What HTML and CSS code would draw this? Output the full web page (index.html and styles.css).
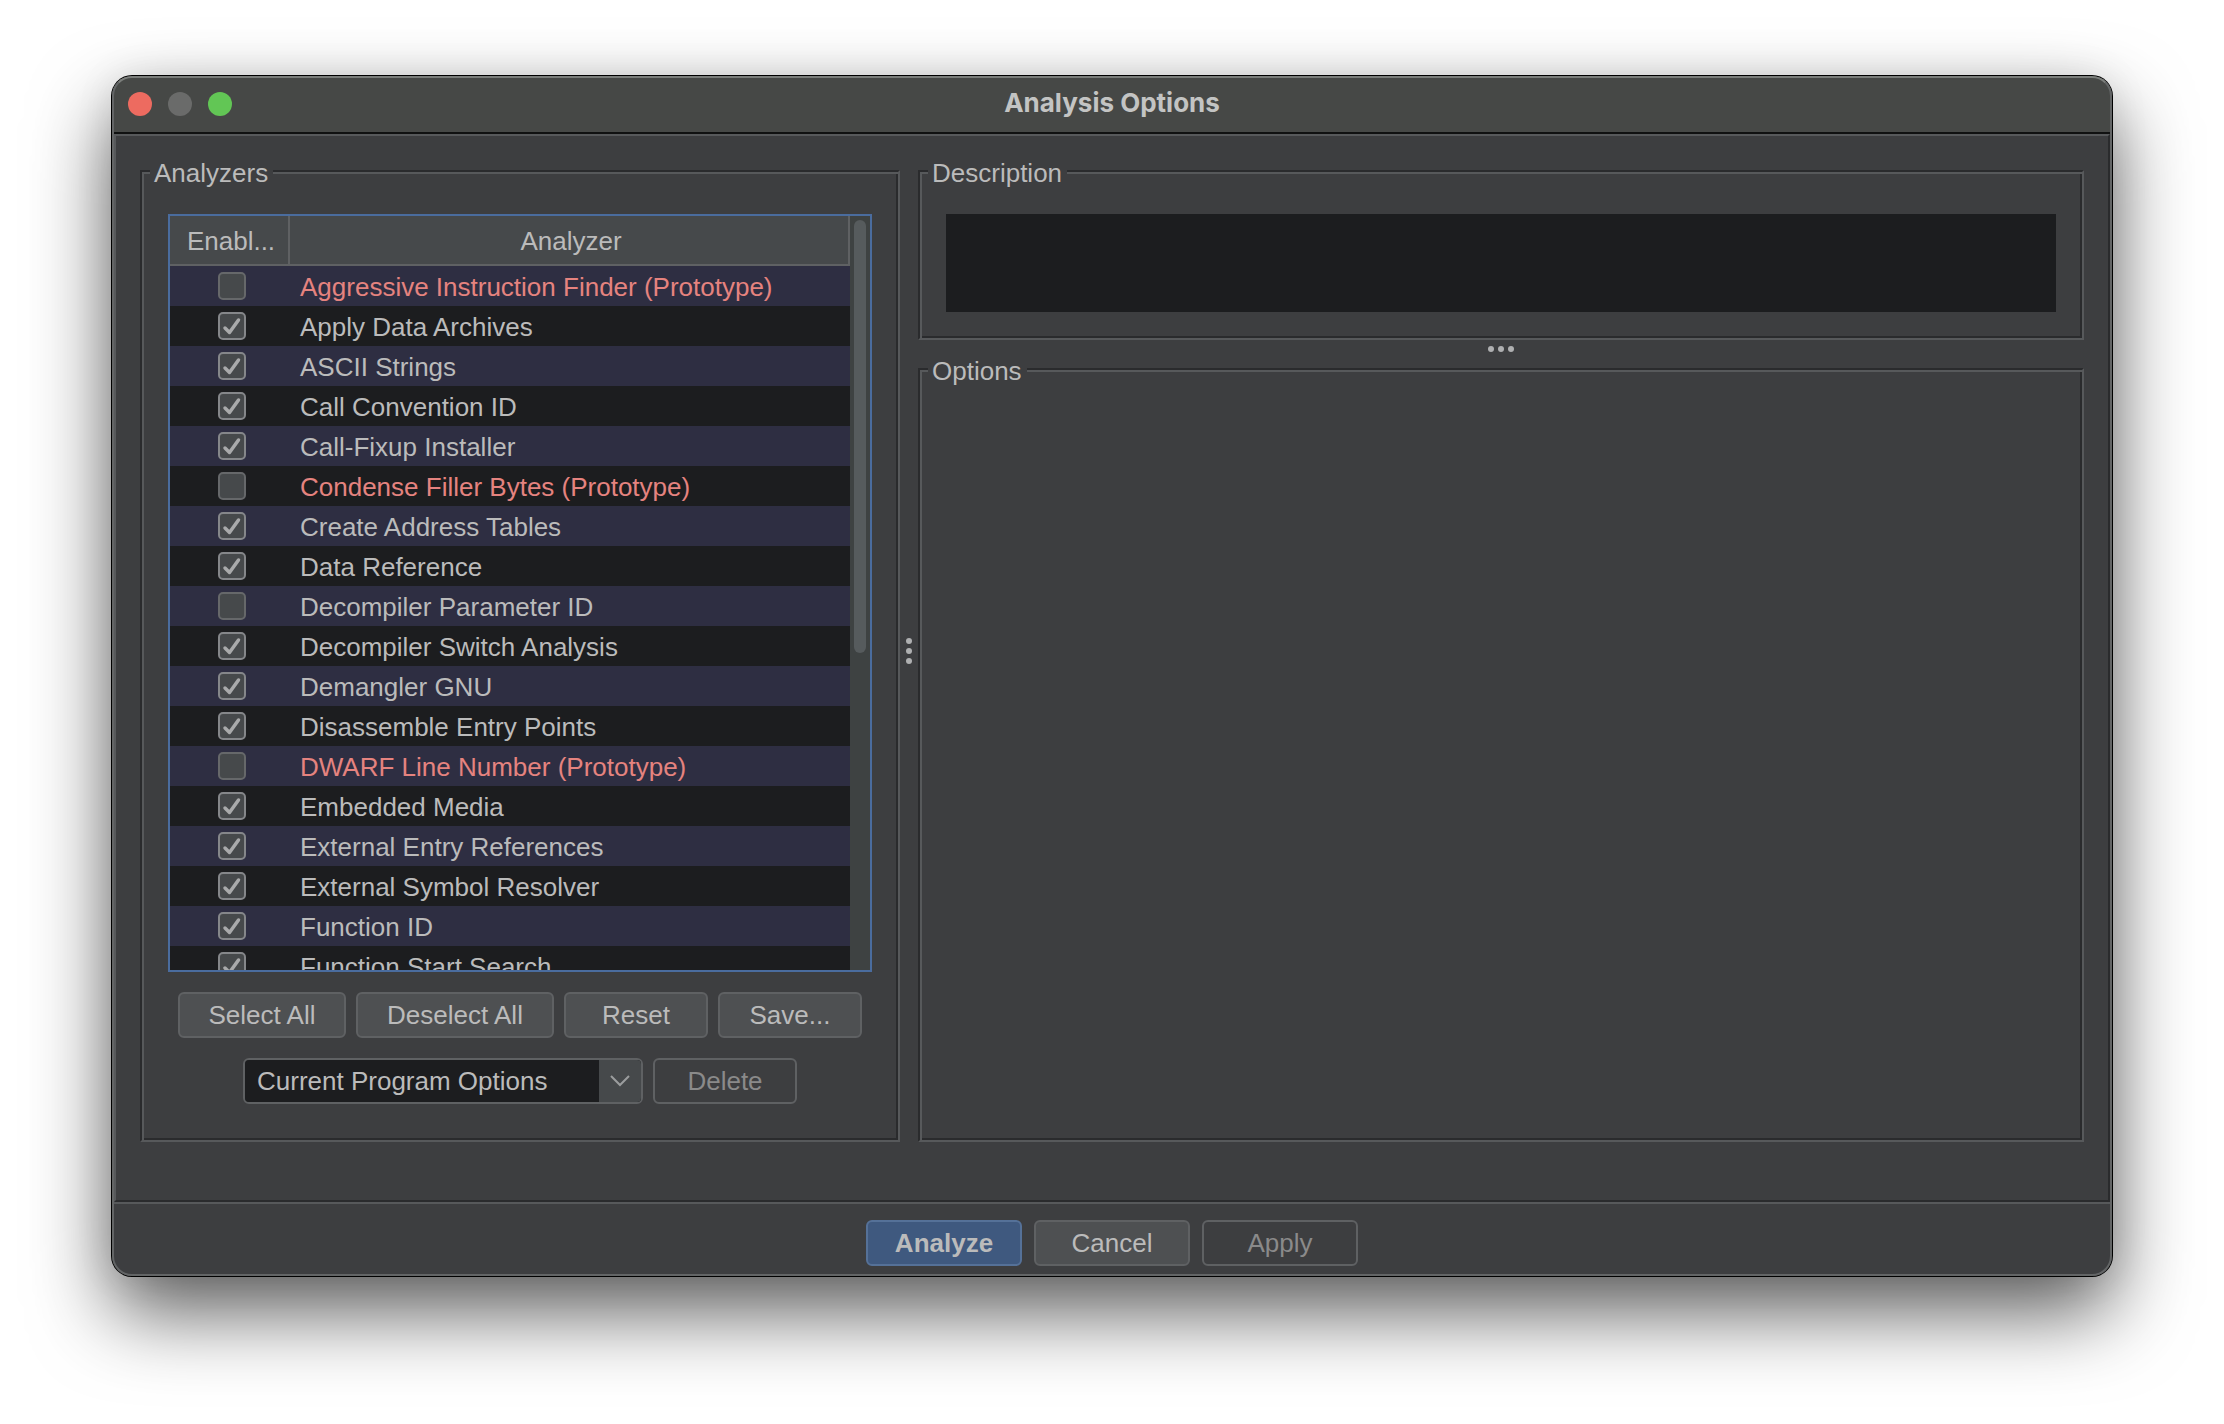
FILE: index.html
```html
<!DOCTYPE html>
<html lang="en">
<head>
<meta charset="utf-8">
<title>Analysis Options</title>
<link rel="stylesheet" href="styles.css">
</head>
<body>
<main class="window">
  <header class="titlebar">
    <div class="lights">
      <button class="light light-close" type="button" aria-label="Close"></button>
      <button class="light light-min" type="button" aria-label="Minimize" disabled></button>
      <button class="light light-zoom" type="button" aria-label="Zoom"></button>
    </div>
    <h1 class="title">Analysis Options</h1>
  </header>

  <div class="content">
    <div class="pane">
      <section class="group group-analyzers">
        <h2 class="group-title">Analyzers</h2>
        <div class="table-frame">
          <div class="table-view">
            <table class="analyzers">
              <colgroup><col class="col-enabled"><col></colgroup>
              <thead>
                <tr><th scope="col">Enabl...</th><th scope="col">Analyzer</th></tr>
              </thead>
              <tbody>
                <tr class="proto"><td><input type="checkbox" id="a1"></td><td><label for="a1">Aggressive Instruction Finder (Prototype)</label></td></tr>
                <tr><td><input type="checkbox" id="a2" checked></td><td><label for="a2">Apply Data Archives</label></td></tr>
                <tr><td><input type="checkbox" id="a3" checked></td><td><label for="a3">ASCII Strings</label></td></tr>
                <tr><td><input type="checkbox" id="a4" checked></td><td><label for="a4">Call Convention ID</label></td></tr>
                <tr><td><input type="checkbox" id="a5" checked></td><td><label for="a5">Call-Fixup Installer</label></td></tr>
                <tr class="proto"><td><input type="checkbox" id="a6"></td><td><label for="a6">Condense Filler Bytes (Prototype)</label></td></tr>
                <tr><td><input type="checkbox" id="a7" checked></td><td><label for="a7">Create Address Tables</label></td></tr>
                <tr><td><input type="checkbox" id="a8" checked></td><td><label for="a8">Data Reference</label></td></tr>
                <tr><td><input type="checkbox" id="a9"></td><td><label for="a9">Decompiler Parameter ID</label></td></tr>
                <tr><td><input type="checkbox" id="a10" checked></td><td><label for="a10">Decompiler Switch Analysis</label></td></tr>
                <tr><td><input type="checkbox" id="a11" checked></td><td><label for="a11">Demangler GNU</label></td></tr>
                <tr><td><input type="checkbox" id="a12" checked></td><td><label for="a12">Disassemble Entry Points</label></td></tr>
                <tr class="proto"><td><input type="checkbox" id="a13"></td><td><label for="a13">DWARF Line Number (Prototype)</label></td></tr>
                <tr><td><input type="checkbox" id="a14" checked></td><td><label for="a14">Embedded Media</label></td></tr>
                <tr><td><input type="checkbox" id="a15" checked></td><td><label for="a15">External Entry References</label></td></tr>
                <tr><td><input type="checkbox" id="a16" checked></td><td><label for="a16">External Symbol Resolver</label></td></tr>
                <tr><td><input type="checkbox" id="a17" checked></td><td><label for="a17">Function ID</label></td></tr>
                <tr><td><input type="checkbox" id="a18" checked></td><td><label for="a18">Function Start Search</label></td></tr>
              </tbody>
            </table>
          </div>
          <div class="scroll-track"><div class="scroll-thumb"></div></div>
        </div>
        <div class="row">
          <button class="btn btn-select" type="button">Select All</button>
          <button class="btn btn-deselect" type="button">Deselect All</button>
          <button class="btn" type="button">Reset</button>
          <button class="btn" type="button">Save...</button>
        </div>
        <div class="row">
          <div class="combo">
            <select aria-label="Saved configuration"><option>Current Program Options</option></select>
            <span class="combo-arrow"><svg width="20" height="12" viewBox="0 0 20 12" aria-hidden="true"><path d="M1 1 10 10 19 1" fill="none" stroke="#9b9d9e" stroke-width="2"/></svg></span>
          </div>
          <button class="btn" type="button" disabled>Delete</button>
        </div>
      </section>
    </div>

    <div class="splitter splitter-v"><i></i><i></i><i></i></div>

    <div class="side">
      <div class="pane">
        <section class="group group-description">
          <h2 class="group-title">Description</h2>
          <div class="description"></div>
        </section>
      </div>
      <div class="splitter splitter-h"><i></i><i></i><i></i></div>
      <div class="pane pane-fill">
        <section class="group">
          <h2 class="group-title">Options</h2>
        </section>
      </div>
    </div>
  </div>

  <footer class="footer">
    <button class="btn btn-wide btn-default" type="button">Analyze</button>
    <button class="btn btn-wide" type="button">Cancel</button>
    <button class="btn btn-wide" type="button" disabled>Apply</button>
  </footer>
</main>
</body>
</html>
```
FILE: styles.css
```css
:root {
  --panel: #3d3e40;
  --well: #1c1d1f;
  --line-dark: #2a2b2d;
  --line-light: #57595b;
  --border: #5f6163;
  --text: #bbbbbb;
  --muted: #8a8a8a;
}

* {
  box-sizing: border-box;
}

body {
  margin: 0;
  height: 100vh;
  padding: 76px 112px 148px;
  display: flex;
  background: #fff;
  color: var(--text);
  font: 26px/30px "Liberation Sans", Arial, sans-serif;
}

.window {
  flex: 1;
  min-width: 0;
  position: relative;
  display: flex;
  flex-direction: column;
  background: var(--panel);
  border-radius: 20px;
  box-shadow: 0 0 0 1px #000, 0 36px 80px rgba(0, 0, 0, 0.64), 0 0 40px rgba(0, 0, 0, 0.08);
}

/* light rim on the inside of the window edge */
.window::after {
  content: "";
  position: absolute;
  inset: 0;
  border: 2px solid #636566;
  border-top-color: #7b7e7b;
  border-radius: 20px;
  pointer-events: none;
}

/* title bar */
.titlebar {
  height: 56px;
  flex: none;
  padding: 0 16px;
  display: grid;
  grid-template-columns: 1fr auto 1fr;
  align-items: center;
  background: #464846;
  border-radius: 20px 20px 0 0;
}

.lights {
  display: flex;
  gap: 16px;
}

.light {
  width: 24px;
  height: 24px;
  padding: 0;
  border: 0;
  border-radius: 50%;
}

.light-close { background: #ed6b60; }
.light-min { background: #6a6b6a; }
.light-zoom { background: #62c655; }

.title {
  margin: 0;
  padding-bottom: 2px;
  font: 700 26px/30px Inter, sans-serif;
  color: #c3c4c3;
}

/* content */
.content {
  flex: 1;
  min-height: 0;
  display: grid;
  grid-template-columns: 760fr 18px 1166fr;
  grid-template-rows: minmax(0, 1fr);
  padding: 24px 24px 58px;
  border: 2px solid var(--line-light);
  border-right-color: var(--line-dark);
  border-bottom-color: var(--line-dark);
  margin: 2px 2px 0;
  box-shadow: 0 -2px 0 #101111;
}

.pane {
  padding-top: 10px;
  display: flex;
  min-width: 0;
  min-height: 0;
}

.pane-fill {
  flex: 1;
}

.side {
  display: flex;
  flex-direction: column;
  min-width: 0;
}

.group {
  flex: 1;
  min-width: 0;
  display: flex;
  flex-direction: column;
  padding: 0 26px 26px;
  border: 2px solid;
  border-color: var(--line-dark) var(--line-light) var(--line-light) var(--line-dark);
  box-shadow: inset 2px 2px 0 var(--line-light), inset -2px -2px 0 var(--line-dark);
}

.group-analyzers {
  gap: 20px;
  padding-bottom: 36px;
}

.group-title {
  align-self: flex-start;
  margin: -14px 0 26px -18px;
  padding: 0 5px 0 4px;
  background: var(--panel);
  font-size: 26px;
  line-height: 30px;
  font-weight: 400;
}

.group-analyzers .group-title {
  margin-bottom: 6px;
}

.description {
  height: 98px;
  background: var(--well);
}

/* splitters */
.splitter {
  display: flex;
  align-items: center;
  justify-content: center;
  gap: 4px;
}

.splitter-v {
  flex-direction: column;
}

.splitter-h {
  height: 18px;
}

.splitter i {
  width: 6px;
  height: 6px;
  border-radius: 50%;
  background: #afb0b1;
}

/* analyzer table */
.table-frame {
  flex: 1 1 0;
  min-height: 0;
  display: flex;
  overflow: hidden;
  border: 2px solid #4a6c9e;
}

.table-view {
  flex: 1;
  min-width: 0;
  overflow: hidden;
}

.analyzers {
  width: 100%;
  table-layout: fixed;
  border-collapse: separate;
  border-spacing: 0;
}

.col-enabled {
  width: 120px;
}

.analyzers th {
  height: 50px;
  padding: 2px 0 0 4px;
  background: #46494b;
  border: solid var(--border);
  border-width: 0 2px 2px 0;
  font-weight: 400;
}

.analyzers td {
  height: 40px;
  padding: 2px 0 0 10px;
  background: var(--well);
  white-space: nowrap;
}

.analyzers td:first-child {
  padding: 0 0 0 48px;
}

.analyzers tbody tr:nth-child(odd) td {
  background: #2e2e42;
}

.proto {
  color: #e5837f;
}

.analyzers input {
  appearance: none;
  display: block;
  width: 28px;
  height: 28px;
  margin: 0;
  border: 2px solid #66686a;
  border-radius: 5px;
  background: #46494b;
}

.analyzers input:checked {
  border-color: #85878a;
  background: #46494b url("data:image/svg+xml,%3Csvg xmlns='http://www.w3.org/2000/svg' viewBox='0 0 24 24'%3E%3Cpath d='M5 14 9.500 18.500 18.500 6' fill='none' stroke='%23a9aaab' stroke-width='3.500' stroke-linecap='round' stroke-linejoin='round'/%3E%3C/svg%3E") center / 24px 24px no-repeat;
}

.scroll-track {
  width: 20px;
  padding: 4px;
  background: #3e4242;
}

.scroll-thumb {
  width: 12px;
  height: 58%;
  border-radius: 6px;
  background: #565b5d;
}

/* controls */
.row {
  display: flex;
  justify-content: center;
  gap: 10px;
}

.btn {
  width: 144px;
  height: 46px;
  padding: 0;
  border: 2px solid var(--border);
  border-radius: 6px;
  background: #4e5052;
  color: var(--text);
  font: inherit;
}

.btn:disabled {
  background: var(--panel);
  color: var(--muted);
}

.btn-select { width: 168px; }
.btn-deselect { width: 198px; }
.btn-wide { width: 156px; }

.btn-default {
  background: #3f597f;
  border-color: #557198;
  font-weight: 700;
}

.combo {
  position: relative;
  width: 400px;
  height: 46px;
  border: 2px solid var(--border);
  border-radius: 6px;
  overflow: hidden;
}

.combo select {
  appearance: none;
  display: block;
  width: 100%;
  height: 100%;
  margin: 0;
  padding: 0 44px 0 12px;
  border: 0;
  background: var(--well);
  color: var(--text);
  font: inherit;
}

.combo-arrow {
  position: absolute;
  inset: 0 0 0 auto;
  width: 42px;
  display: flex;
  align-items: center;
  justify-content: center;
  background: #46494b;
  pointer-events: none;
}

/* footer */
.footer {
  flex: none;
  display: flex;
  justify-content: center;
  gap: 12px;
  padding: 16px 0 10px;
  border-top: 2px solid var(--line-light);
}
```
